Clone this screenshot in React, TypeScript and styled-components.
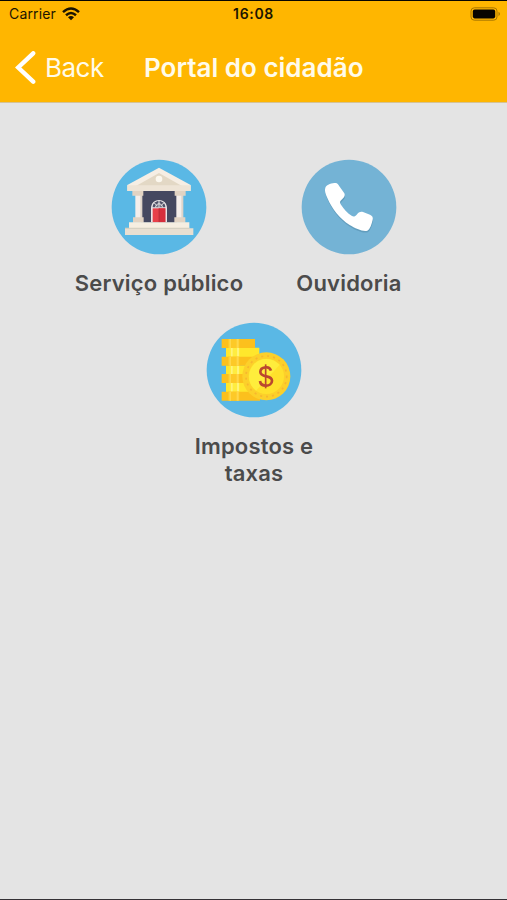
import React from 'react';
import styled, { createGlobalStyle } from 'styled-components';

const GlobalStyle = createGlobalStyle`
  * { box-sizing: border-box; }
  body { margin: 0; background: #e4e4e4; font-family: Inter, "Liberation Sans", sans-serif; }
`;

const Screen = styled.main`
  display: flex;
  flex-direction: column;
  height: 900px;
  background: #e4e4e4;
  border-bottom: 1px solid #343135;
`;

const Header = styled.header`
  height: 102px;
  flex: none;
  background: #ffb600;
  border-top: 1px solid #080500;
  box-shadow: 0 1px 0 #d5c294;
  color: #fff;
`;

const StatusBar = styled.div`
  display: grid;
  grid-template-columns: 1fr auto 1fr;
  align-items: center;
  height: 25px;
  padding: 0 6px;
  color: #1c1500;
`;

const Carrier = styled.div`
  display: flex;
  align-items: center;
  gap: 6px;
  padding-left: 3px;
  font-size: 14px;
  letter-spacing: 0.15px;
`;

const Clock = styled.time`
  font-size: 14px;
  font-weight: 600;
  letter-spacing: 0.65px;
`;

const Battery = styled.svg`
  justify-self: end;
`;

const NavBar = styled.nav`
  display: flex;
  align-items: center;
  height: 76px;
  padding: 7px 0 0 15px;
`;

const BackButton = styled.button`
  display: flex;
  align-items: center;
  gap: 9px;
  width: 129px;
  padding: 0;
  border: 0;
  background: none;
  color: #fffbea;
  font: 400 26px/34px Inter, sans-serif;
  letter-spacing: -0.5px;
`;

const Title = styled.h1`
  margin: 0;
  color: #fffbea;
  font-size: 26px;
  line-height: 34px;
  font-weight: 600;
  letter-spacing: 0;
  white-space: nowrap;
`;

const Menu = styled.section`
  display: flex;
  flex-wrap: wrap;
  justify-content: center;
  padding: 57px 63px 0 64px;
`;

const MenuItem = styled.a`
  display: flex;
  flex-direction: column;
  align-items: center;
  width: 190px;
  min-height: 163px;
`;

const Label = styled.span<{ $width?: number }>`
  width: ${({ $width }) => ($width ? `${$width}px` : 'auto')};
  margin-top: 15px;
  color: #4b4b4b;
  font-size: 22px;
  line-height: 27px;
  font-weight: 600;
  letter-spacing: 0.2px;
  text-align: center;
`;

const DiscSvg = styled.svg`
  flex: none;
`;

const Disc = ({ color, children }: { color: string; children: React.ReactNode }) => (
  <DiscSvg width="96" height="96" viewBox="18 12 288 288">
    <circle cx="162" cy="156" r="142" fill={color} />
    {children}
  </DiscSvg>
);

const Bank = () => (
  <Disc color="#5ab8e5">
    <path d="M108 108H216V203H108Z" fill="#454860" />
    <path d="M162 38L257 90V108H67V90Z" fill="#f6eee4" />
    <path d="M162 54L235 95H89Z" fill="#e3d8c5" />
    <path d="M67 91H257V108H67Z" fill="#eee4d6" />
    <circle cx="162" cy="72" r="10" fill="#fcf8ef" />
    <path d="M91 120H111V191H91ZM214 120H234V191H214Z" fill="#f5eeea" />
    <path d="M106 120H112V191H106ZM229 120H235V191H229Z" fill="#dfd4ca" />
    <path d="M82 108H115V122H82ZM209 108H242V122H209ZM84 187H116V203H84ZM208 187H241V203H208Z" fill="#e2d3c3" />
    <path d="M138 202V160C138 127 186 127 186 160V202Z" fill="#e9e5e6" />
    <path d="M143 157C143 132 181 132 181 157Z" fill="#51536a" />
    <path d="M143 160H181V202H143Z" fill="#e7404a" />
    <path d="M162 160H181V202H162Z" fill="#d62e3c" />
    <path d="M152 157C152 143 172 143 172 157M162 138V157M147 143L158 154M177 143L166 154" fill="none" stroke="#eee" strokeWidth="3" />
    <path d="M162 160V202" stroke="#a92f3b" strokeWidth="2" />
    <path d="M72 202H253V220H72Z" fill="#f6eee1" />
    <path d="M60 220H265V240H60Z" fill="#e9dfd1" />
    <path d="M72 218H253V221H60V218Z" fill="#d9cebd" />
  </Disc>
);

const handset =
  'M91 98C95 88 112 84 122 84C127 84 130 88 133 94L148 115C152 123 145 130 139 135C134 139 134 143 138 149C147 163 157 174 171 183C176 186 181 184 185 179C190 172 196 169 204 171L225 179C232 182 235 187 233 194C230 206 226 222 217 227C204 231 181 220 164 210C133 190 112 163 97 129C91 115 88 107 91 98Z';

const Phone = () => (
  <Disc color="#74b3d5">
    <path d={handset} transform="translate(1 5)" fill="#548cac" opacity=".55" />
    <path d={handset} fill="#fff" />
  </Disc>
);

const Coins = () => (
  <Disc color="#5ab8e5">
    {[89, 142, 194].map((y) => (
      <g key={y}>
        <path d={`M78 ${y}h${y === 89 ? 100 : 70}v28H78Z`} fill="#ffe72c" />
        <path d={`M89 ${y}h30v28H89Z`} fill="#ffec40" />
        <path d={`M93 ${y}h5v28h-5ZM111 ${y}h6v28h-6Z`} fill="#fff47a" />
      </g>
    ))}
    {[63, 116, 168, 221].map((y) => (
      <g key={y}>
        <path d={`M65 ${y}h${y === 221 ? 115 : 100}v27H65Z`} fill="#fcc01d" />
        <path d={`M84 ${y}h34v27H84Z`} fill="#fdc927" />
        <path d={`M88 ${y}h5v27h-5ZM110 ${y}h6v27h-6Z`} fill="#ffd74b" />
      </g>
    ))}
    <circle cx="199" cy="175" r="72" fill="#fcd02a" />
    <circle cx="199" cy="175" r="61" fill="none" stroke="#f7b62f" strokeWidth="5" strokeDasharray="6 12" />
    <circle cx="199" cy="175" r="53" fill="#ffe12c" />
    <path d="M158 208A53 53 0 0 1 223 128L239 140L168 218Z" fill="#ffed3c" />
    <path d="M213 158C210 149 202 147 196 148C187 149 181 155 181 162C182 181 216 169 216 188C216 197 208 203 198 203C188 203 181 198 180 189" fill="none" stroke="#ba472f" strokeWidth="8" />
    <path d="M197 139V211" stroke="#ba472f" strokeWidth="5" />
  </Disc>
);

const items = [
  { label: 'Serviço público', Icon: Bank },
  { label: 'Ouvidoria', Icon: Phone },
  { label: 'Impostos e taxas', Icon: Coins, width: 140 },
];

export default function App() {
  return (
    <Screen>
      <GlobalStyle />
      <Header>
        <StatusBar>
          <Carrier>
            Carrier
            <svg width="18" height="14" viewBox="0 0 18 14">
              <path d="M1 5.1Q9-2 17 5.1M4 8.2Q9 3.8 14 8.2" fill="none" stroke="currentColor" strokeWidth="2.5" />
              <path d="M6 10.2Q9 7.8 12 10.2L9 13.3Z" fill="currentColor" />
            </svg>
          </Carrier>
          <Clock>16:08</Clock>
          <Battery width="31" height="14" viewBox="0 0 31 14">
            <rect x="1" y=".8" width="26" height="12.4" rx="3.3" fill="none" stroke="#a87700" />
            <rect x="2.8" y="2.6" width="22.4" height="8.8" rx="1.8" fill="#080500" />
            <path d="M28.5 4.8Q31.5 7 28.5 9.2Z" fill="#a87700" />
          </Battery>
        </StatusBar>
        <NavBar>
          <BackButton>
            <svg width="21" height="34" viewBox="0 0 21 34">
              <path d="M18.2 2.3L3.2 16.5L18.2 30.7" fill="none" stroke="#fff" strokeWidth="4.4" strokeLinecap="round" />
            </svg>
            Back
          </BackButton>
          <Title>Portal do cidadão</Title>
        </NavBar>
      </Header>
      <Menu>
        {items.map(({ label, Icon, width }) => (
          <MenuItem key={label}>
            <Icon />
            <Label $width={width}>{label}</Label>
          </MenuItem>
        ))}
      </Menu>
    </Screen>
  );
}
